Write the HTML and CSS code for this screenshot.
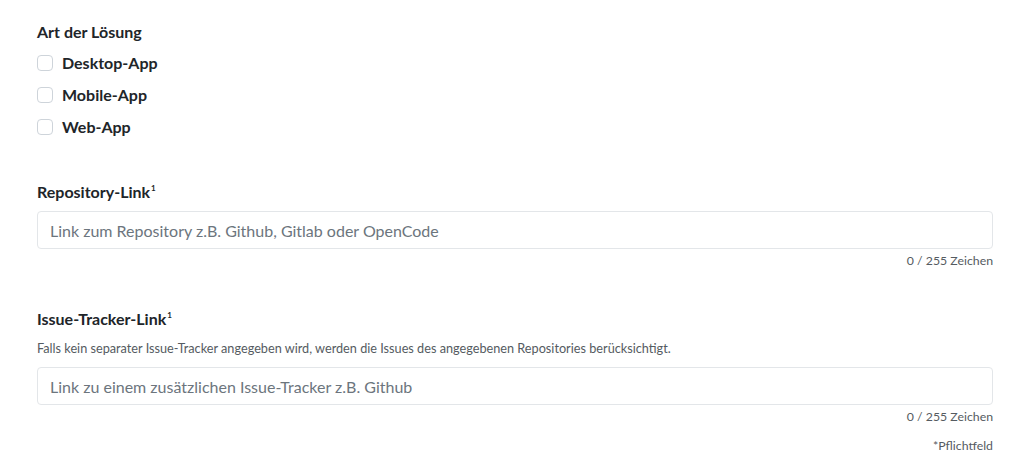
FILE: index.html
```html
<!DOCTYPE html>
<html lang="de">
<head>
<meta charset="utf-8">
<title>Formular</title>
<link rel="stylesheet" href="styles.css">
</head>
<body>
<form class="form">
  <fieldset class="group">
    <legend class="label legend">Art der Lösung</legend>
    <label class="check"><input type="checkbox" class="box"><span>Desktop-App</span></label>
    <label class="check"><input type="checkbox" class="box"><span>Mobile-App</span></label>
    <label class="check"><input type="checkbox" class="box"><span>Web-App</span></label>
  </fieldset>

  <div class="field field-repo">
    <label class="label" for="repo">Repository-Link<sup class="sup">1</sup></label>
    <input id="repo" class="input" type="text" placeholder="Link zum Repository z.B. Github, Gitlab oder OpenCode">
    <div class="counter">0 / 255 Zeichen</div>
  </div>

  <div class="field field-issue">
    <label class="label label-help" for="issue">Issue-Tracker-Link<sup class="sup">1</sup></label>
    <div class="help">Falls kein separater Issue-Tracker angegeben wird, werden die Issues des angegebenen Repositories berücksichtigt.</div>
    <input id="issue" class="input" type="text" placeholder="Link zu einem zusätzlichen Issue-Tracker z.B. Github">
    <div class="counter">0 / 255 Zeichen</div>
  </div>

  <div class="required">*Pflichtfeld</div>
</form>
</body>
</html>
```
FILE: styles.css
```css
html, body {
  margin: 0;
  padding: 0;
  background: #ffffff;
}
body {
  font-family: Lato, "Open Sans", sans-serif;
  color: #212529;
}
.form {
  width: 956px;
  padding: 22px 0 0 37px;
  display: flex;
  flex-direction: column;
}
.group {
  border: 0;
  margin: 0;
  padding: 0;
  display: flex;
  flex-direction: column;
  gap: 8px;
}
.label {
  display: block;
  padding: 0;
  font-size: 16px;
  font-weight: 700;
  line-height: 20px;
}
.legend {
  margin-bottom: 9px;
}
.sup {
  font-size: 8px;
  line-height: 0;
  vertical-align: 7px;
  margin-left: 1px;
}
.check {
  display: flex;
  align-items: center;
  height: 24px;
  font-size: 16px;
  font-weight: 700;
  line-height: 24px;
}
.box {
  appearance: none;
  -webkit-appearance: none;
  width: 16px;
  height: 16px;
  margin: 0 9px 0 0;
  border: 1px solid #ced4da;
  border-radius: 4px;
  background: #fff;
}
.field {
  display: flex;
  flex-direction: column;
}
.field-repo {
  margin-top: 43px;
}
.field-issue {
  margin-top: 40px;
}
.field .label {
  margin-bottom: 9px;
}
.field .label-help {
  margin-bottom: 10px;
}
.help {
  font-size: 12.7px;
  line-height: 16px;
  color: #555b61;
  margin: 1px 0 11px;
  white-space: nowrap;
}
.input {
  box-sizing: border-box;
  width: 100%;
  height: 38px;
  margin: 0;
  padding: 0 12px;
  border: 1px solid #e3e6e9;
  border-radius: 4px;
  font-family: Lato, "Open Sans", sans-serif;
  font-size: 16px;
  color: #212529;
  background: #fff;
}
.input::placeholder {
  color: #6c757d;
}
.counter {
  text-align: right;
  font-size: 12.3px;
  line-height: 16px;
  color: #555b61;
  margin-top: 4px;
}
.required {
  text-align: right;
  font-size: 12.3px;
  line-height: 16px;
  color: #555b61;
  margin-top: 13px;
}
```
